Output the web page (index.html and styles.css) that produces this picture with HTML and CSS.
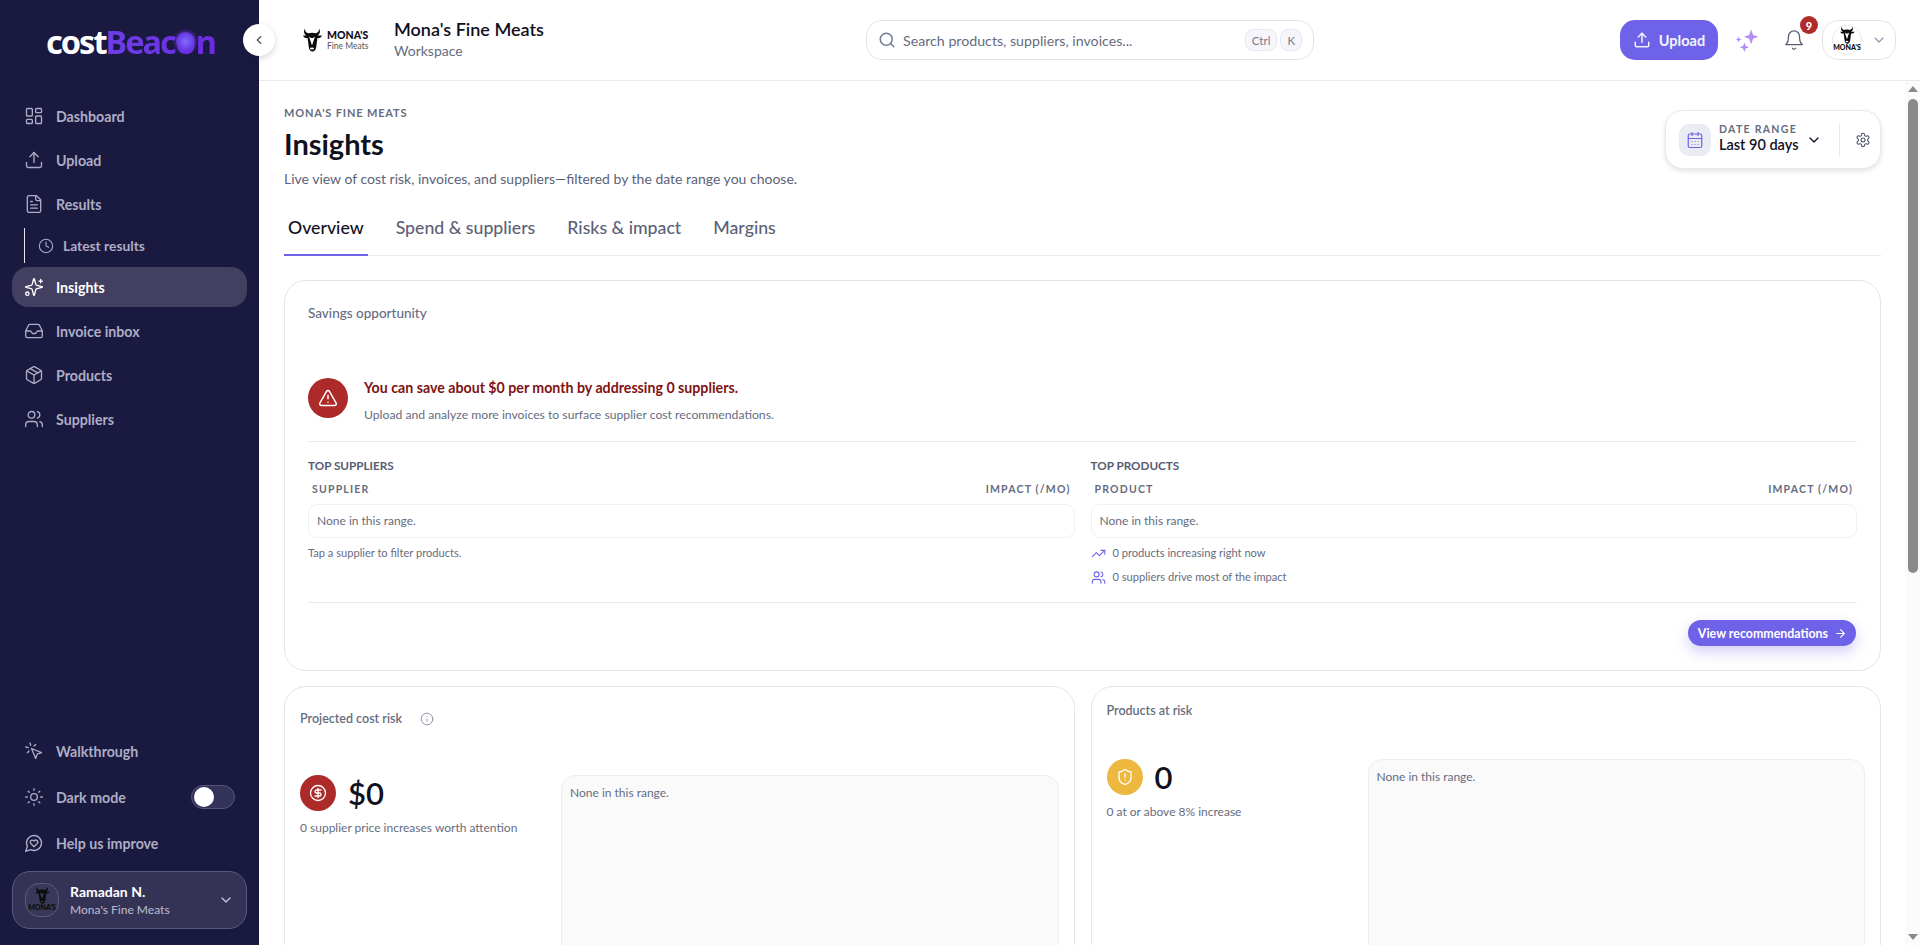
FILE: index.html
```html
<!DOCTYPE html>
<html lang="en">
<head>
    <meta charset="UTF-8">
    <meta name="viewport" content="width=device-width, initial-scale=1.0">
    <title>Insights - costBeacon</title>
    <link rel="stylesheet" href="styles.css">
</head>
<body>
    <svg class="icon-defs" aria-hidden="true">
        <symbol id="i-dashboard" viewBox="0 0 24 24"><rect x="3" y="3" width="7" height="9" rx="1"/><rect x="14" y="3" width="7" height="5" rx="1"/><rect x="14" y="12" width="7" height="9" rx="1"/><rect x="3" y="16" width="7" height="5" rx="1"/></symbol>
        <symbol id="i-upload" viewBox="0 0 24 24"><path d="M21 15v4a2 2 0 0 1-2 2H5a2 2 0 0 1-2-2v-4"/><path d="M17 8l-5-5-5 5"/><path d="M12 3v12"/></symbol>
        <symbol id="i-file" viewBox="0 0 24 24"><path d="M15 2H6a2 2 0 0 0-2 2v16a2 2 0 0 0 2 2h12a2 2 0 0 0 2-2V7Z"/><path d="M14 2v4a2 2 0 0 0 2 2h4"/><path d="M10 9H8"/><path d="M16 13H8"/><path d="M16 17H8"/></symbol>
        <symbol id="i-clock" viewBox="0 0 24 24"><circle cx="12" cy="12" r="10"/><path d="M12 6v6l4 2"/></symbol>
        <symbol id="i-sparkles" viewBox="0 0 24 24"><path d="M9.937 15.5A2 2 0 0 0 8.5 14.063l-6.135-1.582a.5.5 0 0 1 0-.962L8.5 9.936A2 2 0 0 0 9.937 8.5l1.582-6.135a.5.5 0 0 1 .963 0L14.063 8.5A2 2 0 0 0 15.5 9.937l6.135 1.581a.5.5 0 0 1 0 .964L15.5 14.063a2 2 0 0 0-1.437 1.437l-1.582 6.135a.5.5 0 0 1-.963 0z"/><path d="M20 3v4"/><path d="M22 5h-4"/><circle cx="4" cy="20" r="2"/></symbol>
        <symbol id="i-inbox" viewBox="0 0 24 24"><path d="M22 12h-6l-2 3h-4l-2-3H2"/><path d="M5.45 5.11 2 12v6a2 2 0 0 0 2 2h16a2 2 0 0 0 2-2v-6l-3.45-6.89A2 2 0 0 0 16.76 4H7.24a2 2 0 0 0-1.79 1.11z"/></symbol>
        <symbol id="i-package" viewBox="0 0 24 24"><path d="M11 21.73a2 2 0 0 0 2 0l7-4A2 2 0 0 0 21 16V8a2 2 0 0 0-1-1.73l-7-4a2 2 0 0 0-2 0l-7 4A2 2 0 0 0 3 8v8a2 2 0 0 0 1 1.73z"/><path d="M12 22V12"/><path d="M3.29 7 12 12l8.71-5"/><path d="m7.5 4.27 9 5.15"/></symbol>
        <symbol id="i-users" viewBox="0 0 24 24"><path d="M16 21v-2a4 4 0 0 0-4-4H6a4 4 0 0 0-4 4v2"/><circle cx="9" cy="7" r="4"/><path d="M22 21v-2a4 4 0 0 0-3-3.87"/><path d="M16 3.13a4 4 0 0 1 0 7.75"/></symbol>
        <symbol id="i-pointer" viewBox="0 0 24 24"><path d="m9 9 5 12 1.8-5.2L21 14Z"/><path d="M7.2 2.2 8 5.1"/><path d="m5.1 8-2.9-.8"/><path d="M14 4.1 12 6"/><path d="m6 12-1.9 2"/></symbol>
        <symbol id="i-sun" viewBox="0 0 24 24"><circle cx="12" cy="12" r="4"/><path d="M12 2v2"/><path d="M12 20v2"/><path d="m4.93 4.93 1.41 1.41"/><path d="m17.66 17.66 1.41 1.41"/><path d="M2 12h2"/><path d="M20 12h2"/><path d="m6.34 17.66-1.41 1.41"/><path d="m19.07 4.93-1.41 1.41"/></symbol>
        <symbol id="i-heart-chat" viewBox="0 0 24 24"><path d="M7.9 20A9 9 0 1 0 4 16.1L2 22Z"/><path d="M15.8 9.2a2.5 2.5 0 0 0-3.5 0l-.3.4-.35-.3a2.42 2.42 0 1 0-3.2 3.6l3.6 3.5 3.6-3.5c1.2-1.2 1.1-2.7.2-3.7"/></symbol>
        <symbol id="i-chevron-down" viewBox="0 0 24 24"><path d="m6 9 6 6 6-6"/></symbol>
        <symbol id="i-chevron-left" viewBox="0 0 24 24"><path d="m15 18-6-6 6-6"/></symbol>
        <symbol id="i-search" viewBox="0 0 24 24"><circle cx="11" cy="11" r="8"/><path d="m21 21-4.3-4.3"/></symbol>
        <symbol id="i-bell" viewBox="0 0 24 24"><path d="M6 8a6 6 0 0 1 12 0c0 7 3 9 3 9H3s3-2 3-9"/><path d="M10.3 21a1.94 1.94 0 0 0 3.4 0"/></symbol>
        <symbol id="i-calendar" viewBox="0 0 24 24"><rect x="3" y="4" width="18" height="18" rx="2"/><path d="M16 2v4"/><path d="M8 2v4"/><path d="M3 10h18"/><path d="M8 14h.01M12 14h.01M16 14h.01M8 18h.01M12 18h.01M16 18h.01"/></symbol>
        <symbol id="i-gear" viewBox="0 0 24 24"><path d="M12.22 2h-.44a2 2 0 0 0-2 2v.18a2 2 0 0 1-1 1.73l-.43.25a2 2 0 0 1-2 0l-.15-.08a2 2 0 0 0-2.73.73l-.22.38a2 2 0 0 0 .73 2.73l.15.1a2 2 0 0 1 1 1.72v.51a2 2 0 0 1-1 1.74l-.15.09a2 2 0 0 0-.73 2.73l.22.38a2 2 0 0 0 2.73.73l.15-.08a2 2 0 0 1 2 0l.43.25a2 2 0 0 1 1 1.73V20a2 2 0 0 0 2 2h.44a2 2 0 0 0 2-2v-.18a2 2 0 0 1 1-1.73l.43-.25a2 2 0 0 1 2 0l.15.08a2 2 0 0 0 2.73-.73l.22-.39a2 2 0 0 0-.73-2.73l-.15-.08a2 2 0 0 1-1-1.74v-.5a2 2 0 0 1 1-1.74l.15-.09a2 2 0 0 0 .73-2.73l-.22-.38a2 2 0 0 0-2.73-.73l-.15.08a2 2 0 0 1-2 0l-.43-.25a2 2 0 0 1-1-1.73V4a2 2 0 0 0-2-2z"/><circle cx="12" cy="12" r="3"/></symbol>
        <symbol id="i-alert" viewBox="0 0 24 24"><path d="m21.73 18-8-14a2 2 0 0 0-3.48 0l-8 14A2 2 0 0 0 4 21h16a2 2 0 0 0 1.73-3"/><path d="M12 9v4"/><path d="M12 17h.01"/></symbol>
        <symbol id="i-trend" viewBox="0 0 24 24"><path d="M22 7l-8.5 8.5-5-5L2 17"/><path d="M16 7h6v6"/></symbol>
        <symbol id="i-arrow" viewBox="0 0 24 24"><path d="M5 12h14"/><path d="m12 5 7 7-7 7"/></symbol>
        <symbol id="i-info" viewBox="0 0 24 24"><circle cx="12" cy="12" r="10"/><path d="M12 16v-4"/><path d="M12 8h.01"/></symbol>
        <symbol id="i-dollar" viewBox="0 0 24 24"><circle cx="12" cy="12" r="10"/><path d="M16 8h-6a2 2 0 1 0 0 4h4a2 2 0 1 1 0 4H8"/><path d="M12 18V6"/></symbol>
        <symbol id="i-shield" viewBox="0 0 24 24"><path d="M20 13c0 5-3.5 7.5-7.66 8.95a1 1 0 0 1-.67-.01C7.5 20.5 4 18 4 13V6a1 1 0 0 1 1-1c2 0 4.5-1.2 6.24-2.72a1.17 1.17 0 0 1 1.52 0C14.51 3.81 17 5 19 5a1 1 0 0 1 1 1z"/><path d="M12 8v4"/><path d="M12 16h.01"/></symbol>
        <symbol id="i-stars" viewBox="0 0 24 24"><path d="M15.5 1.5l1.9 5.1 5.1 1.9-5.1 1.9-1.9 5.1-1.9-5.1-5.1-1.9 5.1-1.9z"/><path d="M9 14l1.2 3.3 3.3 1.2-3.3 1.2L9 23l-1.2-3.3-3.3-1.2 3.3-1.2z"/><path d="M3.5 8l.8 2.2 2.2.8-2.2.8-.8 2.2-.8-2.2L.5 11l2.2-.8z"/></symbol>
        <symbol id="i-cow" viewBox="0 0 24 24">
            <path fill="#0b0b0b" d="M5 .5c-.4 2.500 1 4.200 3.500 4.800 2.300-.8 4.700-.8 7 0C18 4.700 19.400 3 19 .5c1.800 3 .8 5.700-1.500 7h4.500c-.6 1.800-2.300 2.800-4.600 2.600l-1.100 8.400c-.3 3.200-1.900 5-3.800 5s-3.500-1.800-3.800-5L7.600 10.100C5.300 10.300 3.600 9.300 3 7.500h3.500C4.200 6.200 3.200 3.500 5 .5z"/>
            <path fill="currentColor" d="M9 8.500l3 9 3-9-2 1.500h-2z"/>
            <ellipse cx="12" cy="20.500" rx="2" ry="1" fill="currentColor"/>
        </symbol>
    </svg>

    <div class="app">
        <aside class="sidebar">
            <div class="brand">cost<span class="brand-accent">Beac<span class="brand-dot">o</span>n</span></div>
            <button class="collapse-btn" type="button" aria-label="Collapse sidebar"><svg class="ic"><use href="#i-chevron-left"/></svg></button>

            <nav class="nav">
                <a class="nav-item"><svg class="ic"><use href="#i-dashboard"/></svg>Dashboard</a>
                <a class="nav-item"><svg class="ic"><use href="#i-upload"/></svg>Upload</a>
                <a class="nav-item"><svg class="ic"><use href="#i-file"/></svg>Results</a>
                <a class="nav-sub"><svg class="ic"><use href="#i-clock"/></svg>Latest results</a>
                <a class="nav-item active"><svg class="ic"><use href="#i-sparkles"/></svg>Insights</a>
                <a class="nav-item"><svg class="ic"><use href="#i-inbox"/></svg>Invoice inbox</a>
                <a class="nav-item"><svg class="ic"><use href="#i-package"/></svg>Products</a>
                <a class="nav-item"><svg class="ic"><use href="#i-users"/></svg>Suppliers</a>
            </nav>

            <div class="side-bottom">
                <a class="nav-item"><svg class="ic"><use href="#i-pointer"/></svg>Walkthrough</a>
                <a class="nav-item"><svg class="ic"><use href="#i-sun"/></svg>Dark mode<span class="toggle"><span class="knob"></span></span></a>
                <a class="nav-item"><svg class="ic"><use href="#i-heart-chat"/></svg>Help us improve</a>
            </div>

            <div class="user-card">
                <div class="user-avatar">
                    <svg class="cow"><use href="#i-cow"/></svg>
                    <span class="avatar-word">MONA'S</span>
                </div>
                <div class="user-text">
                    <div class="user-name">Ramadan N.</div>
                    <div class="user-org">Mona's Fine Meats</div>
                </div>
                <svg class="ic user-chevron"><use href="#i-chevron-down"/></svg>
            </div>
        </aside>

        <div class="page">
            <header class="topbar">
                <div class="org">
                    <div class="org-logo">
                        <svg class="cow"><use href="#i-cow"/></svg>
                        <div class="org-logo-text">
                            <div class="org-logo-name">MONA'S</div>
                            <div class="org-logo-sub">Fine Meats</div>
                        </div>
                    </div>
                    <div class="org-text">
                        <div class="org-title">Mona's Fine Meats</div>
                        <div class="org-sub">Workspace</div>
                    </div>
                </div>

                <div class="search">
                    <svg class="ic"><use href="#i-search"/></svg>
                    <span class="search-text">Search products, suppliers, invoices...</span>
                    <span class="kbd">Ctrl</span>
                    <span class="kbd">K</span>
                </div>

                <div class="top-actions">
                    <button class="upload-btn" type="button"><svg class="ic"><use href="#i-upload"/></svg>Upload</button>
                    <svg class="stars"><use href="#i-stars"/></svg>
                    <div class="bell">
                        <svg class="ic"><use href="#i-bell"/></svg>
                        <span class="badge">9</span>
                    </div>
                    <div class="account">
                        <div class="account-avatar">
                            <svg class="cow"><use href="#i-cow"/></svg>
                            <span class="avatar-word">MONA'S</span>
                        </div>
                        <svg class="ic"><use href="#i-chevron-down"/></svg>
                    </div>
                </div>
            </header>

            <div class="page-body">
                <main class="content">
                    <div class="head-row">
                        <div>
                            <div class="eyebrow">MONA'S FINE MEATS</div>
                            <h1>Insights</h1>
                            <p class="lead">Live view of cost risk, invoices, and suppliers—filtered by the date range you choose.</p>
                        </div>
                        <div class="date-card">
                            <span class="date-icon"><svg class="ic"><use href="#i-calendar"/></svg></span>
                            <div class="date-text">
                                <div class="date-label">DATE RANGE</div>
                                <div class="date-value">Last 90 days</div>
                            </div>
                            <svg class="ic date-chevron"><use href="#i-chevron-down"/></svg>
                            <span class="date-sep"></span>
                            <svg class="ic date-gear"><use href="#i-gear"/></svg>
                        </div>
                    </div>

                    <div class="tabs">
                        <a class="tab active">Overview</a>
                        <a class="tab">Spend &amp; suppliers</a>
                        <a class="tab">Risks &amp; impact</a>
                        <a class="tab">Margins</a>
                    </div>

                    <section class="card savings">
                        <div class="card-title">Savings opportunity</div>
                        <div class="alert-row">
                            <span class="round round-red round-lg"><svg class="ic"><use href="#i-alert"/></svg></span>
                            <div>
                                <div class="alert-title">You can save about $0 per month by addressing 0 suppliers.</div>
                                <div class="alert-sub">Upload and analyze more invoices to surface supplier cost recommendations.</div>
                            </div>
                        </div>
                        <div class="top-grid">
                            <div>
                                <div class="top-title">TOP SUPPLIERS</div>
                                <div class="col-head"><span>SUPPLIER</span><span>IMPACT (/MO)</span></div>
                                <div class="empty-row">None in this range.</div>
                                <div class="note">Tap a supplier to filter products.</div>
                            </div>
                            <div>
                                <div class="top-title">TOP PRODUCTS</div>
                                <div class="col-head"><span>PRODUCT</span><span>IMPACT (/MO)</span></div>
                                <div class="empty-row">None in this range.</div>
                                <div class="note note-icon"><svg class="ic"><use href="#i-trend"/></svg>0 products increasing right now</div>
                                <div class="note note-icon"><svg class="ic"><use href="#i-users"/></svg>0 suppliers drive most of the impact</div>
                            </div>
                        </div>
                        <div class="card-foot">
                            <button class="rec-btn" type="button">View recommendations<svg class="ic"><use href="#i-arrow"/></svg></button>
                        </div>
                    </section>

                    <div class="metric-grid">
                        <section class="card metric metric-cost">
                            <div class="card-title">Projected cost risk<svg class="ic info"><use href="#i-info"/></svg></div>
                            <div class="metric-body">
                                <div class="metric-left">
                                    <div class="metric-value">
                                        <span class="round round-red"><svg class="ic"><use href="#i-dollar"/></svg></span>
                                        <span class="metric-num">$0</span>
                                    </div>
                                    <div class="metric-note">0 supplier price increases worth attention</div>
                                </div>
                                <div class="metric-box">None in this range.</div>
                            </div>
                        </section>
                        <section class="card metric metric-risk">
                            <div class="card-title">Products at risk</div>
                            <div class="metric-body">
                                <div class="metric-left">
                                    <div class="metric-value">
                                        <span class="round round-amber"><svg class="ic"><use href="#i-shield"/></svg></span>
                                        <span class="metric-num">0</span>
                                    </div>
                                    <div class="metric-note">0 at or above 8% increase</div>
                                </div>
                                <div class="metric-box">None in this range.</div>
                            </div>
                        </section>
                    </div>
                </main>

                <div class="scrollbar">
                    <span class="arrow-up"></span>
                    <span class="thumb"></span>
                    <span class="arrow-down"></span>
                </div>
            </div>
        </div>
    </div>
</body>
</html>
```

FILE: styles.css
```css
* {
    box-sizing: border-box;
}
html, body {
    height: 100%;
    margin: 0;
    overflow: hidden;
}
body {
    font-family: Lato, "Noto Sans", sans-serif;
    color: #0f1020;
    background: #fff;
}
h1, p {
    margin: 0;
}
button {
    font-family: inherit;
    border: 0;
    cursor: pointer;
}
.icon-defs {
    display: none;
}
.ic {
    width: 18px;
    height: 18px;
    flex: none;
    fill: none;
    stroke: currentColor;
    stroke-width: 2;
    stroke-linecap: round;
    stroke-linejoin: round;
}
.cow {
    color: #fff;
}
.app {
    display: flex;
    height: 945px;
}

/* sidebar */
.sidebar {
    position: relative;
    width: 259px;
    flex: none;
    display: flex;
    flex-direction: column;
    padding: 0 12px 16px;
    background: #1a1940;
    color: #adadc4;
}
.brand {
    height: 96px;
    padding: 20px 0 0 34px;
    font-family: "Noto Sans", sans-serif;
    font-size: 32.5px;
    line-height: 44px;
    font-weight: 700;
    letter-spacing: -2px;
    color: #fff;
}
.brand-accent {
    background: linear-gradient(90deg, #6d3fe8, #6a2be0);
    -webkit-background-clip: text;
    background-clip: text;
    color: transparent;
}
.brand-dot {
    display: inline-block;
    width: 19px;
    height: 19px;
    margin: 0 1px;
    border-radius: 50%;
    line-height: 19px;
    background: radial-gradient(circle, #7f6bff 0%, #6a3be6 60%, #5a28c8 100%);
    box-shadow: 0 0 5px #6a3be6;
    color: transparent;
}
.collapse-btn {
    position: absolute;
    top: 24px;
    right: -16px;
    width: 32px;
    height: 32px;
    display: flex;
    align-items: center;
    justify-content: center;
    padding: 0;
    border-radius: 50%;
    background: #fff;
    color: #4b5268;
    box-shadow: 0 2px 6px rgba(15, 16, 32, 0.18);
    z-index: 2;
}
.collapse-btn .ic {
    width: 14px;
    height: 14px;
}
.nav {
    display: flex;
    flex-direction: column;
    gap: 4px;
    flex: 1;
}
.nav-item {
    height: 40px;
    display: flex;
    align-items: center;
    gap: 12px;
    padding: 0 12px;
    border-radius: 16px;
    font-size: 14.2px;
    font-weight: 700;
}
.nav-item .ic {
    width: 20px;
    height: 20px;
    stroke-width: 1.6;
}
.nav-item.active {
    background: #423f61;
    color: #fff;
}
.nav-sub {
    height: 35px;
    margin-left: 12px;
    display: flex;
    align-items: center;
    gap: 9px;
    padding-left: 13px;
    border-left: 1px solid #e6e6f0;
    font-size: 13.8px;
    font-weight: 700;
}
.nav-sub .ic {
    width: 16px;
    height: 16px;
    stroke-width: 1.6;
}
.side-bottom {
    display: flex;
    flex-direction: column;
    gap: 6px;
    margin-bottom: 8px;
}
.toggle {
    width: 44px;
    height: 24px;
    margin-left: auto;
    padding: 1px 2px;
    border: 1px solid #56547a;
    border-radius: 12px;
    background: #33325a;
}
.knob {
    display: block;
    width: 20px;
    height: 20px;
    border-radius: 50%;
    background: #fff;
}
.user-card {
    height: 58px;
    display: flex;
    align-items: center;
    gap: 11px;
    padding: 0 12px;
    border: 1px solid #5c5a7c;
    border-radius: 18px;
    background: #353355;
}
.user-avatar {
    width: 34px;
    height: 34px;
    flex: none;
    display: flex;
    flex-direction: column;
    align-items: center;
    padding-top: 2px;
    border: 1px solid #5c5a7c;
    border-radius: 14px;
    background: #3a3858;
}
.user-avatar .cow {
    width: 18px;
    height: 18px;
    color: #3a3858;
}
.avatar-word {
    font-size: 7px;
    line-height: 7px;
    font-weight: 900;
    color: #0b0b0b;
}
.user-text {
    flex: 1;
}
.user-name {
    font-size: 14px;
    line-height: 19px;
    font-weight: 700;
    color: #fff;
}
.user-org {
    font-size: 12px;
    line-height: 17px;
    font-weight: 500;
    color: #b4b4cc;
}
.user-chevron {
    width: 16px;
    height: 16px;
    color: #c6c6d8;
}

/* top bar */
.page {
    flex: 1;
    min-width: 0;
    display: flex;
    flex-direction: column;
}
.topbar {
    height: 81px;
    flex: none;
    display: grid;
    grid-template-columns: 1fr 448px 1fr;
    align-items: center;
    padding: 0 24px 0 25px;
    border-bottom: 1px solid #e8e9f0;
}
.org {
    display: flex;
    align-items: center;
    gap: 26px;
    padding-left: 16px;
}
.org-logo {
    width: 68px;
    display: flex;
    align-items: center;
    gap: 3px;
}
.org-logo .cow {
    width: 24px;
    height: 24px;
    flex: none;
}
.org-logo-name {
    font-size: 10.5px;
    line-height: 12px;
    font-weight: 900;
}
.org-logo-sub {
    font-size: 8.5px;
    line-height: 10px;
    color: #555;
}
.org-text {
    padding-bottom: 3px;
}
.org-title {
    font-size: 18px;
    line-height: 25px;
    font-weight: 600;
}
.org-sub {
    font-size: 14px;
    line-height: 18px;
    color: #666c80;
}
.search {
    height: 40px;
    display: flex;
    align-items: center;
    gap: 6px;
    padding: 0 11px;
    border: 1px solid #e2e3ea;
    border-radius: 16px;
    color: #666c80;
}
.search > .ic {
    margin-right: 1px;
    color: #757b90;
}
.search-text {
    flex: 1;
    font-size: 14.2px;
}
.kbd {
    height: 22px;
    display: flex;
    align-items: center;
    padding: 0 6px;
    border: 1px solid #e8e8f2;
    border-radius: 8px;
    background: #f5f5fb;
    font-size: 11.5px;
    color: #757b90;
}
.search .kbd + .kbd {
    margin-left: -3px;
}
.top-actions {
    display: flex;
    align-items: center;
    justify-content: flex-end;
}
.upload-btn {
    width: 98px;
    height: 40px;
    display: flex;
    align-items: center;
    justify-content: center;
    gap: 8px;
    border-radius: 15px;
    background: #6e63e8;
    color: #f4f3ff;
    font-size: 14.5px;
    font-weight: 700;
}
.stars {
    width: 25px;
    height: 25px;
    margin-left: 17px;
    fill: #b48cf5;
}
.bell {
    position: relative;
    width: 22px;
    height: 22px;
    margin-left: 23px;
    color: #555c76;
}
.bell .ic {
    width: 22px;
    height: 22px;
    stroke-width: 1.4;
}
.badge {
    position: absolute;
    top: -13px;
    right: -13px;
    width: 18px;
    height: 18px;
    display: flex;
    align-items: center;
    justify-content: center;
    border-radius: 50%;
    background: #b02a2a;
    color: #fff;
    font-size: 11px;
    font-weight: 900;
}
.account {
    width: 74px;
    height: 40px;
    margin-left: 17px;
    display: flex;
    align-items: center;
    gap: 9px;
    padding-left: 9px;
    border: 1px solid #e2e3ea;
    border-radius: 16px;
    color: #8b90a6;
}
.account .ic {
    width: 16px;
    height: 16px;
    stroke-width: 1.6;
}
.account-avatar {
    width: 30px;
    height: 30px;
    flex: none;
    display: flex;
    flex-direction: column;
    align-items: center;
    border: 1px solid #e8e8ee;
    border-radius: 50%;
    background: #fff;
}
.account-avatar .cow {
    width: 18px;
    height: 18px;
}

/* main area */
.page-body {
    flex: 1;
    min-height: 0;
    display: flex;
}
.content {
    flex: 1;
    min-width: 0;
    overflow: hidden;
    padding: 24px 24px 0 25px;
}
.head-row {
    display: flex;
    justify-content: space-between;
    align-items: flex-start;
}
.eyebrow {
    font-size: 11px;
    line-height: 16px;
    font-weight: 700;
    letter-spacing: 0.85px;
    color: #666c80;
}
h1 {
    margin-top: 3px;
    font-size: 29px;
    line-height: 40px;
    font-weight: 700;
}
.lead {
    margin-top: 5px;
    font-size: 14px;
    line-height: 20px;
    color: #5b6278;
}
.date-card {
    width: 216px;
    height: 59px;
    margin: 5px 0 0;
    display: flex;
    align-items: center;
    padding: 0 9px 0 13px;
    border: 1px solid #e8e9f0;
    border-radius: 18px;
    background: #fff;
    box-shadow: 0 2px 5px rgba(15, 16, 32, 0.12);
}
.date-icon {
    width: 32px;
    height: 32px;
    flex: none;
    display: flex;
    align-items: center;
    justify-content: center;
    border-radius: 10px;
    background: #eaebf3;
    color: #6e63e8;
}
.date-icon .ic {
    stroke-width: 1.6;
}
.date-text {
    margin: -3px 0 0 8px;
    flex: 1;
}
.date-label {
    font-size: 10.5px;
    line-height: 14px;
    font-weight: 700;
    letter-spacing: 1.3px;
    color: #666c80;
}
.date-value {
    font-size: 14.5px;
    line-height: 18px;
    font-weight: 600;
}
.date-chevron {
    width: 16px;
    height: 16px;
}
.date-sep {
    width: 1px;
    height: 32px;
    margin: 0 15px 0 17px;
    background: #e8e9f0;
}
.date-gear {
    width: 16px;
    height: 16px;
    stroke-width: 1.6;
    color: #4b5268;
}
.tabs {
    display: flex;
    gap: 24px;
    margin-top: 12px;
    border-bottom: 1px solid #e8e9f0;
}
.tab {
    height: 55px;
    padding: 15px 4px 0;
    margin-bottom: -1px;
    border-bottom: 2px solid transparent;
    font-size: 17.7px;
    line-height: 24px;
    font-weight: 500;
    color: #5b6278;
}
.tab.active {
    color: #0f1020;
    border-bottom-color: #6e63e8;
}

/* cards */
.card {
    border: 1px solid #e4e5ea;
    border-radius: 22px;
    background: #fff;
}
.card-title {
    display: flex;
    align-items: center;
    font-size: 12.5px;
    line-height: 20px;
    font-weight: 600;
    color: #666c80;
}
.savings {
    height: 391px;
    margin-top: 24px;
    padding: 22px 23px 0;
}
.savings .card-title {
    font-size: 13.5px;
    font-weight: 500;
}
.alert-row {
    display: flex;
    gap: 16px;
    height: 64px;
    margin-top: 55px;
    border-bottom: 1px solid #e8e9f0;
}
.round {
    width: 36px;
    height: 36px;
    flex: none;
    display: flex;
    align-items: center;
    justify-content: center;
    border-radius: 50%;
    color: #fff;
}
.round-lg {
    width: 40px;
    height: 40px;
}
.round-lg .ic {
    width: 20px;
    height: 20px;
}
.round-red {
    background: #ad2a2a;
}
.round-amber {
    background: #eeb83e;
}
.alert-title {
    font-size: 14.2px;
    line-height: 20px;
    font-weight: 700;
    color: #7f1212;
}
.alert-sub {
    margin-top: 8px;
    font-size: 12.2px;
    line-height: 18px;
    color: #666c80;
}
.top-grid {
    display: grid;
    grid-template-columns: 1fr 1fr;
    gap: 16px;
    height: 161px;
    padding-top: 14px;
    border-bottom: 1px solid #e8e9f0;
}
.top-title {
    font-size: 11.7px;
    line-height: 18px;
    font-weight: 700;
    color: #555c70;
}
.col-head {
    display: flex;
    justify-content: space-between;
    margin-top: 7px;
    padding: 0 4px;
    font-size: 10.5px;
    line-height: 16px;
    font-weight: 700;
    letter-spacing: 1.2px;
    color: #666c80;
}
.empty-row {
    height: 34px;
    margin-top: 7px;
    padding: 0 8px;
    line-height: 32px;
    border: 1px solid #f0f0f4;
    border-radius: 9px;
    font-size: 12px;
    color: #666c80;
}
.note {
    margin-top: 7px;
    font-size: 11.1px;
    line-height: 16px;
    color: #666c80;
}
.note-icon {
    display: flex;
    align-items: center;
    gap: 7px;
    margin-bottom: 8px;
}
.note-icon .ic {
    width: 15px;
    height: 15px;
    color: #6e63e8;
    stroke-width: 1.7;
}
.card-foot {
    display: flex;
    justify-content: flex-end;
    padding: 17px 1px 0 0;
}
.rec-btn {
    height: 26px;
    display: flex;
    align-items: center;
    gap: 6px;
    padding: 0 9px 0 10px;
    border-radius: 13px;
    background: #6e63e8;
    color: #fff;
    font-size: 12.4px;
    font-weight: 700;
    box-shadow: 0 6px 14px rgba(110, 99, 232, 0.3);
}
.rec-btn .ic {
    width: 13px;
    height: 13px;
}
.metric-grid {
    display: grid;
    grid-template-columns: 1fr 1fr;
    gap: 16px;
    margin-top: 15px;
}
.metric {
    height: 400px;
    padding: 0 15px;
}
.metric-cost .card-title {
    padding-top: 22px;
}
.metric-risk .card-title {
    padding-top: 14px;
}
.info {
    width: 14px;
    height: 14px;
    margin-left: 18px;
    color: #8b90a6;
    stroke-width: 1.6;
}
.metric-body {
    display: flex;
}
.metric-cost .metric-body {
    margin-top: 46px;
}
.metric-risk .metric-body {
    margin-top: 38px;
}
.metric-left {
    width: 261px;
    flex: none;
}
.round .ic {
    stroke-width: 1.8;
}
.metric-value {
    display: flex;
    align-items: center;
    gap: 12px;
}
.metric-num {
    font-size: 31px;
    line-height: 36px;
    font-weight: 600;
}
.metric-note {
    margin-top: 8px;
    font-size: 12px;
    line-height: 18px;
    color: #666c80;
}
.metric-box {
    flex: 1;
    height: 320px;
    padding: 8px;
    border: 1px solid #eeeef2;
    border-radius: 14px;
    background: #fafafa;
    font-size: 12px;
    line-height: 18px;
    color: #666c80;
}

/* page scrollbar */
.scrollbar {
    width: 15px;
    flex: none;
    display: flex;
    flex-direction: column;
    align-items: center;
    background: #fbfbfb;
    padding-top: 5px;
}
.arrow-up, .arrow-down {
    width: 0;
    height: 0;
    flex: none;
    border-left: 5px solid transparent;
    border-right: 5px solid transparent;
}
.arrow-up {
    border-bottom: 6px solid #8a8a8a;
}
.arrow-down {
    margin-top: auto;
    margin-bottom: 5px;
    border-top: 6px solid #8a8a8a;
}
.thumb {
    width: 10px;
    height: 474px;
    margin-top: 7px;
    border-radius: 5px;
    background: #8a8a8a;
}
```
